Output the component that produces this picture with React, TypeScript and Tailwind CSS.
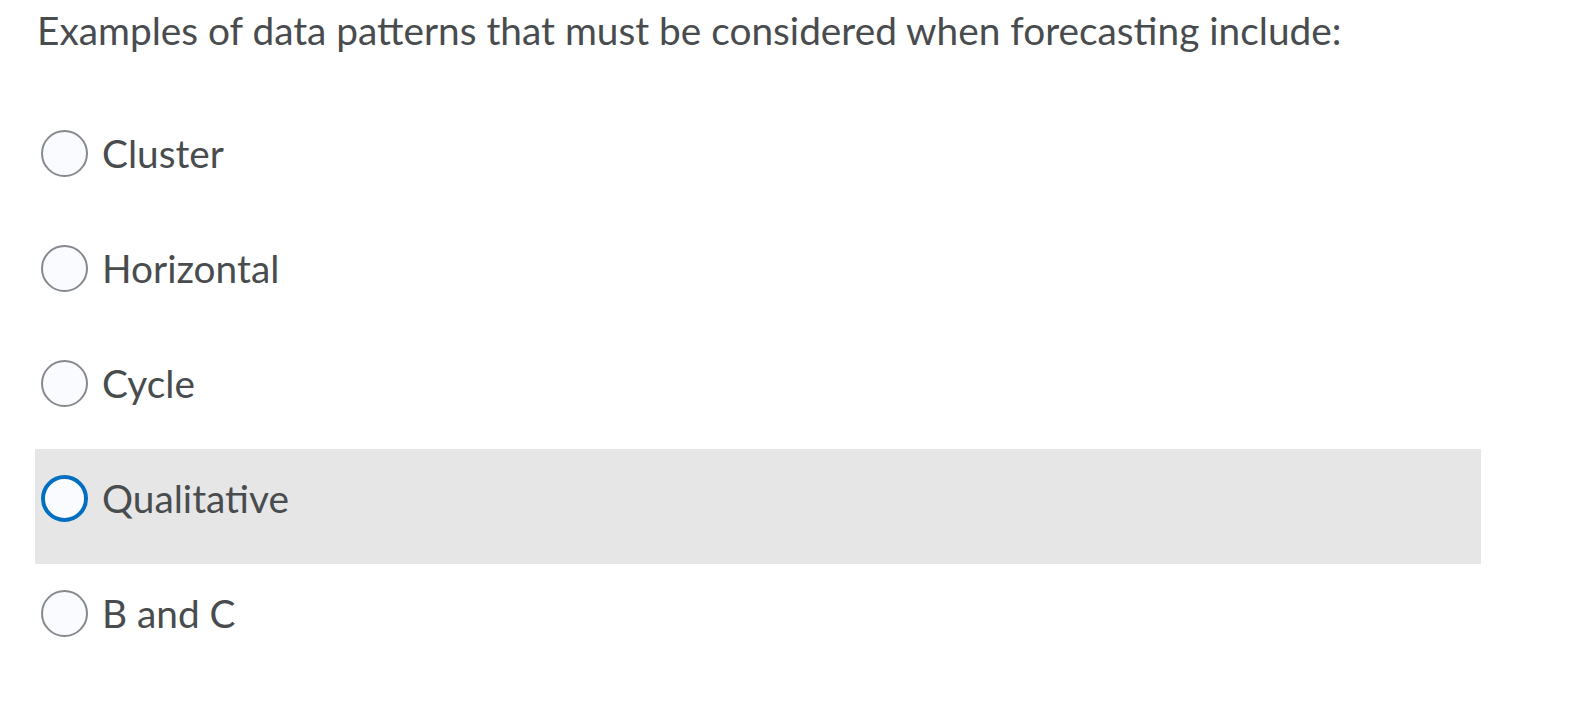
const options = ['Cluster', 'Horizontal', 'Cycle', 'Qualitative', 'B and C']

export default function App() {
  const active = 'Qualitative'

  return (
    <div className="min-h-[720px] w-[1576px] bg-white font-['Lato',_sans-serif] text-[#494c4e]">
      <p className="pl-[37px] pt-[6px] text-[38.8px] leading-[48px]">
        Examples of data patterns that must be considered when forecasting
        include:
      </p>
      <div className="ml-[35px] mt-[50px] flex w-[1446px] flex-col">
        {options.map((opt) => {
          const isActive = opt === active
          return (
            <label
              key={opt}
              className={
                isActive
                  ? 'flex h-[115px] items-start bg-[#e6e6e6] pl-[6px] pt-[26px]'
                  : 'flex h-[115px] items-start pl-[6px] pt-[26px]'
              }
            >
              <span
                className={
                  isActive
                    ? 'box-border h-[47px] w-[47px] shrink-0 rounded-full border-[4px] border-[#006fbf] bg-[#f9fbff]'
                    : 'box-border h-[47px] w-[47px] shrink-0 rounded-full border-2 border-[#868a8e] bg-[#f9fbff]'
                }
              />
              <span className="ml-[14px] flex h-[47px] items-center text-[38.8px]">
                {opt}
              </span>
            </label>
          )
        })}
      </div>
    </div>
  )
}
